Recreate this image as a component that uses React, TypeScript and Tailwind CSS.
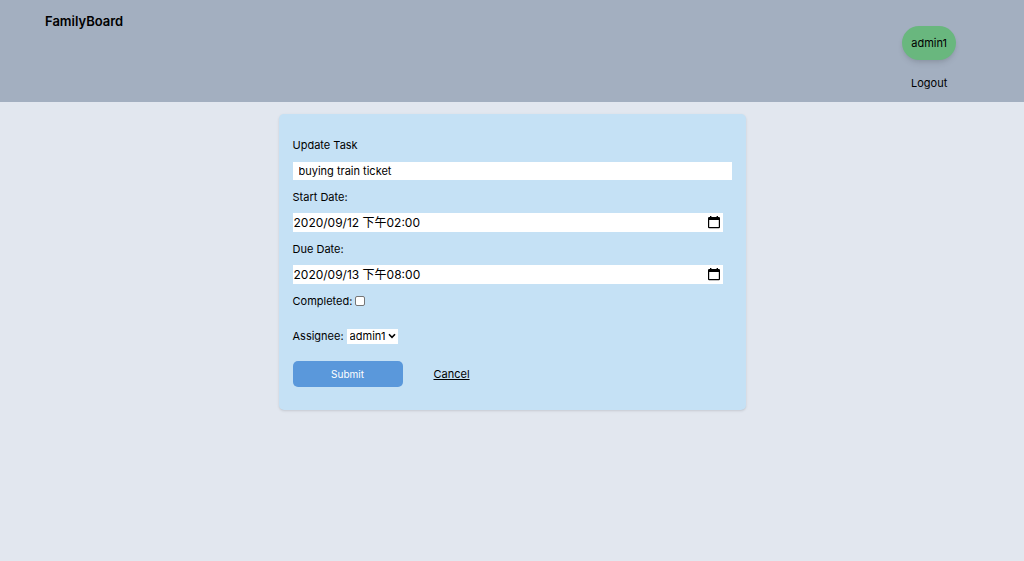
import { useState } from "react";

function CalendarIcon() {
  return (
    <svg viewBox="0 0 12 13" className="h-[13px] w-3" aria-hidden="true">
      <path
        fill="currentColor"
        fillRule="evenodd"
        d="M2 0h1.4v1h5.2V0H10v1h.8A1.2 1.2 0 0 1 12 2.2V11a1.2 1.2 0 0 1-1.200 1.200H1.200A1.200 1.200 0 0 1 0 11V2.200A1.200 1.200 0 0 1 1.200 1H2zM1.200 4v7h9.600V4z"
      />
    </svg>
  );
}

function DateField({ id, label, initial }: { id: string; label: string; initial: string }) {
  const [value, setValue] = useState(initial);
  return (
    <div className="flex flex-col gap-[7px]">
      <label htmlFor={id}>{label}</label>
      <div className="mr-[9px] flex h-[19px] items-center bg-white pr-[3px] pl-px">
        <input
          id={id}
          type="text"
          value={value}
          onChange={(e) => setValue(e.target.value)}
          className="min-w-0 flex-1 bg-transparent text-[12px] leading-[18px] outline-none"
        />
        <button type="button" aria-label={`Pick ${label}`}>
          <CalendarIcon />
        </button>
      </div>
    </div>
  );
}

export default function App() {
  const [title, setTitle] = useState("buying train ticket");
  const [completed, setCompleted] = useState(false);

  return (
    <div className="min-h-screen bg-[#e2e7ef] font-['Inter','Noto_Sans_CJK_TC',sans-serif] text-[11px] leading-[18px] text-black">
      <header className="flex items-start justify-between bg-[#a3afc0] pt-3 pr-[68px] pb-[10px] pl-[45px]">
        <a href="#" className="text-[13px] leading-[18px] font-semibold">
          FamilyBoard
        </a>
        <nav className="flex flex-col items-center gap-[14px] pt-[14px]">
          <a href="#" className="rounded-full bg-[#69b77e] px-[9px] py-2 shadow-md">
            admin1
          </a>
          <a href="#">Logout</a>
        </nav>
      </header>

      <main className="px-4 pt-3">
        <form
          onSubmit={(e) => e.preventDefault()}
          className="mx-auto flex max-w-[467px] flex-col rounded-[5px] bg-[#c5e1f5] px-[14px] pt-[22px] pb-[23px] shadow"
        >
          <div className="flex flex-col gap-2">
            <label htmlFor="title">Update Task</label>
            <input
              id="title"
              type="text"
              value={title}
              onChange={(e) => setTitle(e.target.value)}
              className="h-[18px] w-full bg-white px-[6px] outline-none"
            />
            <DateField id="start" label="Start Date:" initial="2020/09/12 下午02:00" />
            <DateField id="due" label="Due Date:" initial="2020/09/13 下午08:00" />
            <div className="flex items-center gap-[3px]">
              <label htmlFor="completed">Completed:</label>
              <input
                id="completed"
                type="checkbox"
                checked={completed}
                onChange={(e) => setCompleted(e.target.checked)}
                className="h-[10px] w-[10px] appearance-none rounded-[2px] border border-[#767676] bg-white checked:bg-[#5a98db]"
              />
            </div>
          </div>

          <div className="mt-[17px] flex items-center gap-[3px]">
            <label htmlFor="assignee">Assignee:</label>
            <div className="grid items-center">
              <select
                id="assignee"
                className="col-start-1 row-start-1 h-[15px] w-[51px] appearance-none bg-white pl-[3px] leading-[15px]"
              >
                <option>admin1</option>
              </select>
              <svg
                viewBox="0 0 8 6"
                className="pointer-events-none col-start-1 row-start-1 mr-[2px] h-[6px] w-2 justify-self-end"
                aria-hidden="true"
              >
                <path d="M1 1.200 4 4.300 7 1.200" fill="none" stroke="currentColor" strokeWidth="1.600" />
              </svg>
            </div>
          </div>

          <div className="mt-4 flex items-center gap-[31px]">
            <button
              type="submit"
              className="h-[26px] w-[110px] rounded-[5px] bg-[#5a98db] text-[10px] text-white"
            >
              Submit
            </button>
            <a href="#" className="underline">
              Cancel
            </a>
          </div>
        </form>
      </main>
    </div>
  );
}
